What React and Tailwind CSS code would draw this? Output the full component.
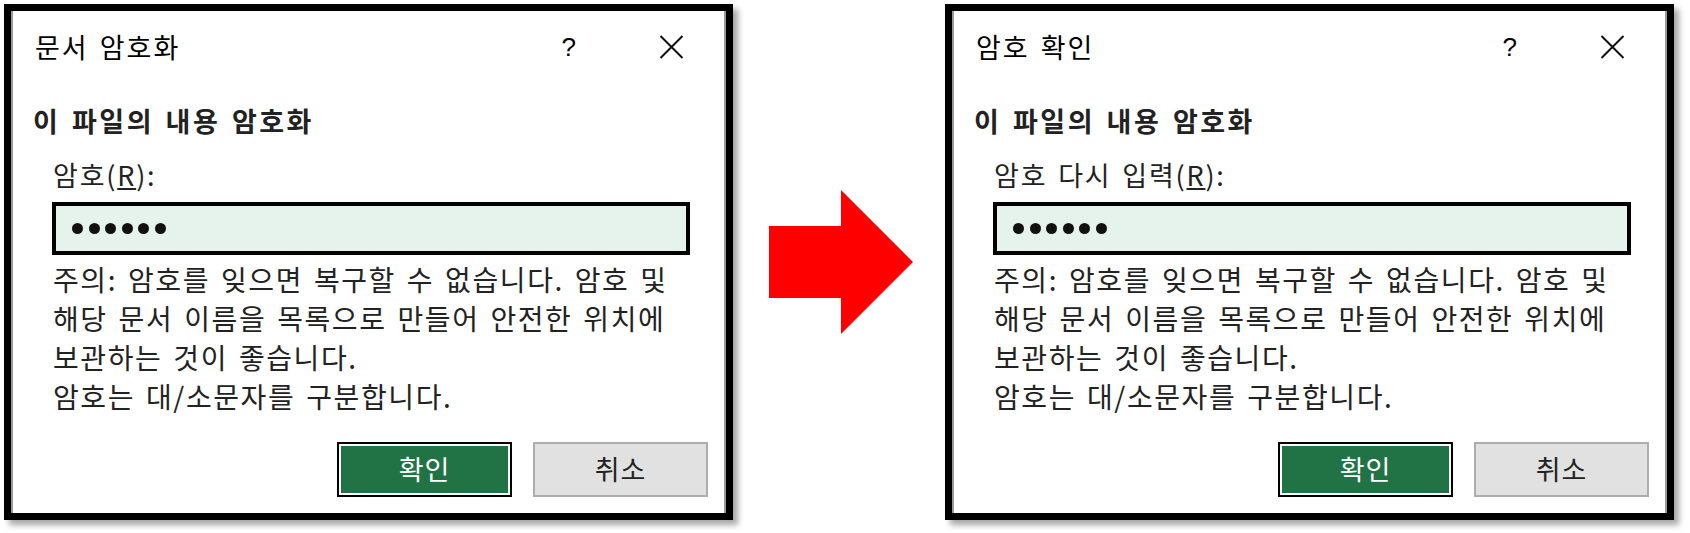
const KR = "font-['Noto_Sans_CJK_KR','Noto_Sans',sans-serif]";

function Dialog({ title, label }) {
  return (
    <div className={`w-[729px] h-[516px] shrink-0 border-[7px] border-black bg-white shadow-[5px_5px_6px_rgba(0,0,0,0.35)] ${KR}`}>
      <div className="h-full border-x-2 border-[#9a9a9a] flex flex-col">
        {/* title bar */}
        <div className="h-[72px] flex items-center pl-[22px] pr-[40px]">
          <span className="text-[27px] tracking-[2px] [word-spacing:3px] text-black">{title}</span>
          <span className="ml-auto text-[26px] text-black font-['Liberation_Sans',sans-serif] mr-[83px]">?</span>
          <svg width="25" height="24" viewBox="0 0 25 24" className="shrink-0">
            <path d="M1.5 1L23.5 23M23.5 1L1.5 23" stroke="#111" strokeWidth="2" fill="none" />
          </svg>
        </div>

        <div className="mt-[18px] h-[40px] flex items-center pl-[20px]">
          <span className="text-[27px] tracking-[2.5px] [word-spacing:3px] font-semibold text-[#222]">이 파일의 내용 암호화</span>
        </div>

        <div className="mt-[14px] h-[40px] flex items-center pl-[40px]">
          <span className="text-[27px] tracking-[1.8px] [word-spacing:3px] text-[#222]">
            {label}(<span className="underline underline-offset-2">R</span>):
          </span>
        </div>

        <div className="mt-[7px] ml-[39px] mr-[34px] h-[53px] border-[4px] border-black bg-[#e6f2ec] flex items-center pl-[16px] gap-[5.5px]">
          {[0, 1, 2, 3, 4, 5].map((i) => (
            <div key={i} className="w-[11px] h-[11px] rounded-full bg-[#111]" />
          ))}
        </div>

        <div className="mt-[5px] pl-[40px] pr-[20px] text-[28px] leading-[39px] tracking-[1.6px] [word-spacing:3px] text-[#222] whitespace-nowrap">
          <p>주의: 암호를 잊으면 복구할 수 없습니다. 암호 및</p>
          <p>해당 문서 이름을 목록으로 만들어 안전한 위치에</p>
          <p>보관하는 것이 좋습니다.</p>
          <p>암호는 대/소문자를 구분합니다.</p>
        </div>

        <div className="mt-[26px] flex justify-end gap-[21px] pr-[16px]">
          <button className="w-[175px] h-[55px] border-2 border-black p-[2px] bg-white">
            <div className="w-full h-full bg-[#217346] text-white text-[27px] tracking-[1px] flex items-center justify-center">확인</div>
          </button>
          <button className="w-[175px] h-[55px] border-2 border-[#adadad] bg-[#e1e1e1] text-[#222] text-[27px] tracking-[1px] flex items-center justify-center">
            취소
          </button>
        </div>
      </div>
    </div>
  );
}

export default function App() {
  return (
    <div className="w-[1690px] h-[533px] bg-white flex pt-[4px] pl-[4px]">
      <Dialog title="문서 암호화" label="암호" />
      <svg width="212" height="516" viewBox="0 0 212 516" className="shrink-0">
        <polygon points="36,222 108,222 108,186 180,258 108,330 108,294 36,294" fill="#ff0000" />
      </svg>
      <div className="w-[730px] shrink-0">
        <Dialog title="암호 확인" label="암호 다시 입력" />
      </div>
    </div>
  );
}
